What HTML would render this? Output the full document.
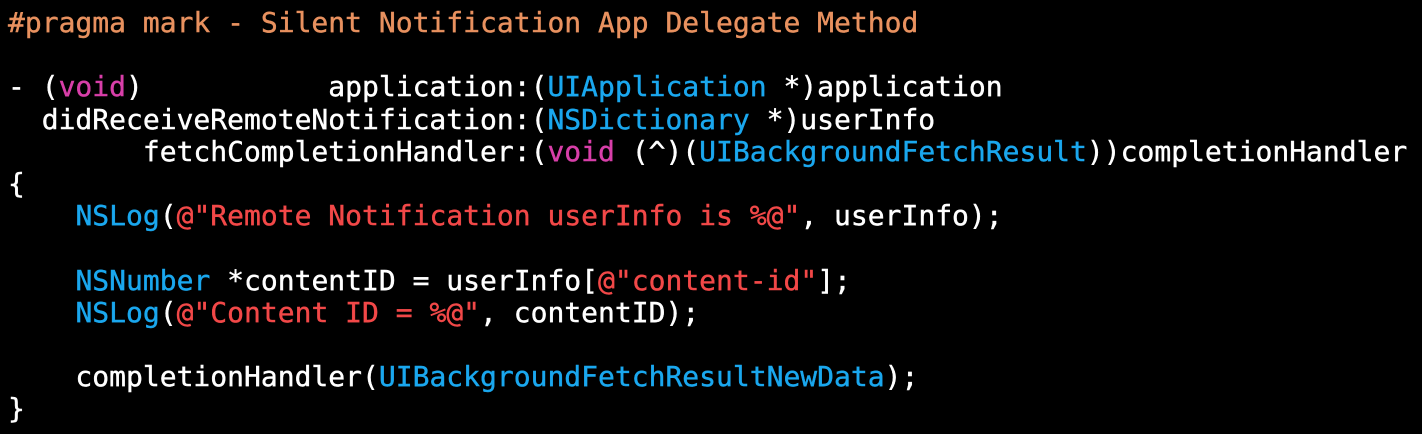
<!DOCTYPE html>
<html><head><style>
html,body{margin:0;padding:0;background:#000;width:1422px;height:434px;overflow:hidden}
pre{margin:0;padding:7px 0 0 8px;font-family:"DejaVu Sans Mono","Liberation Mono",monospace;font-size:28px;line-height:32.2px;color:#fff;white-space:pre;-webkit-text-stroke:0.4px currentColor}
.o{color:#e8915f}.p{color:#d83fa9}.b{color:#1aa7ee}.r{color:#f24848}
</style></head><body><pre><span class="o">#pragma mark - Silent Notification App Delegate Method</span>

- (<span class="p">void</span>)           application:(<span class="b">UIApplication</span> *)application
  didReceiveRemoteNotification:(<span class="b">NSDictionary</span> *)userInfo
        fetchCompletionHandler:(<span class="p">void</span> (^)(<span class="b">UIBackgroundFetchResult</span>))completionHandler
{
    <span class="b">NSLog</span>(<span class="r">@"Remote Notification userInfo is %@"</span>, userInfo);

    <span class="b">NSNumber</span> *contentID = userInfo[<span class="r">@"content-id"</span>];
    <span class="b">NSLog</span>(<span class="r">@"Content ID = %@"</span>, contentID);

    completionHandler(<span class="b">UIBackgroundFetchResultNewData</span>);
}</pre></body></html>
